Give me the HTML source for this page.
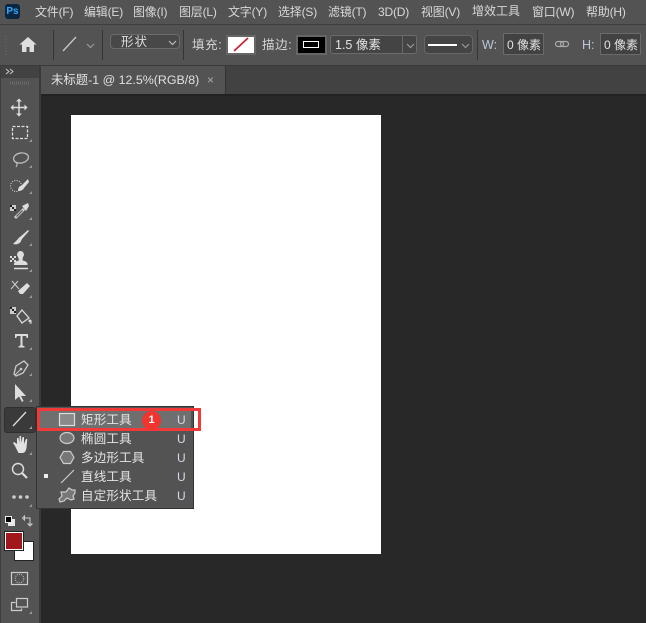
<!DOCTYPE html>
<html lang="zh"><head><meta charset="utf-8"><style>
html,body{margin:0;padding:0}
body{width:646px;height:623px;overflow:hidden;position:relative;background:#282828;font-family:"Liberation Sans","Noto Sans CJK SC",sans-serif;color:#dcdcdc}
.a{position:absolute}
.t{position:absolute;white-space:nowrap;font-size:12px;line-height:16px;letter-spacing:0}
.m{top:4px;color:#d8d8d8;letter-spacing:-.2px}
.i{top:37px;color:#d4d4d4;font-size:12.5px}
.box{position:absolute;box-sizing:border-box}
.mi{position:absolute;left:81px;font-size:12.5px;color:#e4e4e4;line-height:16px;white-space:nowrap;letter-spacing:.2px}
.u{position:absolute;left:177px;font-size:12px;line-height:16px;color:#d8d8e8}
svg{position:absolute;left:0;top:0}
</style></head><body>
<!-- menu bar -->
<div class="a" style="left:0;top:0;width:646px;height:24px;background:#535353"></div>
<div class="a" style="left:0;top:24px;width:646px;height:1px;background:#3d3d3d"></div>
<div class="a" style="left:5px;top:4px;width:15px;height:15px;background:#0a2640;border-radius:3px;color:#31a8ff;font:bold 10px/15px 'Liberation Sans',sans-serif;text-align:center">Ps</div>
<span class="t m" style="left:35px">文件(F)</span>
<span class="t m" style="left:84px">编辑(E)</span>
<span class="t m" style="left:133px">图像(I)</span>
<span class="t m" style="left:179px">图层(L)</span>
<span class="t m" style="left:228px">文字(Y)</span>
<span class="t m" style="left:278px">选择(S)</span>
<span class="t m" style="left:328px">滤镜(T)</span>
<span class="t m" style="left:378px">3D(D)</span>
<span class="t m" style="left:421px">视图(V)</span>
<span class="t m" style="left:472px;top:3px;letter-spacing:0">增效工具</span>
<span class="t m" style="left:532px">窗口(W)</span>
<span class="t m" style="left:586px">帮助(H)</span>
<!-- options bar -->
<div class="a" style="left:0;top:25px;width:646px;height:40px;background:#535353"></div>
<div class="a" style="left:0;top:65px;width:646px;height:1px;background:#3a3a3a"></div>
<div class="a" style="left:53px;top:30px;width:1px;height:30px;background:#353535"></div>
<div class="a" style="left:102px;top:30px;width:1px;height:30px;background:#353535"></div>
<div class="a" style="left:183px;top:30px;width:1px;height:30px;background:#353535"></div>
<div class="a" style="left:477px;top:30px;width:1px;height:30px;background:#353535"></div>
<div class="box" style="left:110px;top:34px;width:70px;height:15px;border:1px solid #6b6b6b;border-radius:4px;background:#484848"></div>
<span class="t" style="left:121px;top:34px;font-size:12.5px;letter-spacing:1px;color:#dedede">形状</span>
<span class="t i" style="left:192px;letter-spacing:.6px">填充:</span>
<div class="box" style="left:226px;top:35px;width:30px;height:20px;border:2px solid #666;background:#fff"></div>
<span class="t i" style="left:262px;letter-spacing:.6px">描边:</span>
<div class="box" style="left:296px;top:35px;width:31px;height:20px;border:2px solid #666;background:#000"></div>
<div class="box" style="left:303px;top:41px;width:16px;height:7px;border:1px solid #fff"></div>
<div class="box" style="left:330px;top:35px;width:87px;height:19px;border:1px solid #6b6b6b;border-radius:3px;background:#444"></div>
<div class="a" style="left:402px;top:35px;width:1px;height:19px;background:#6b6b6b"></div>
<span class="t" style="left:335px;top:37px;font-size:12.5px;color:#e2e2e2">1.5 像素</span>
<div class="box" style="left:424px;top:35px;width:49px;height:19px;border:1px solid #666;border-radius:4px;background:#444"></div>
<div class="a" style="left:428px;top:44px;width:29px;height:2px;background:#fff"></div>
<span class="t" style="left:482px;top:37px;color:#bcc6d6;font-size:12.5px">W:</span>
<div class="box" style="left:503px;top:33px;width:41px;height:22px;border:1px solid #6a6a6a;background:#424242"></div>
<span class="t" style="left:507px;top:37px;font-size:12px;color:#e2e2e2">0 像素</span>
<span class="t" style="left:582px;top:37px;color:#bcc6d6;font-size:12.5px">H:</span>
<div class="box" style="left:600px;top:33px;width:41px;height:22px;border:1px solid #6a6a6a;background:#424242"></div>
<span class="t" style="left:604px;top:37px;font-size:12px;color:#e2e2e2">0 像素</span>
<!-- tab strip -->
<div class="a" style="left:0;top:66px;width:646px;height:29px;background:#424242"></div>
<div class="a" style="left:41px;top:66px;width:184px;height:28px;background:#535353"></div>
<div class="a" style="left:225px;top:66px;width:1px;height:29px;background:#333"></div>
<span class="t" style="left:51px;top:71px;font-size:12.4px;color:#e0e0e0;line-height:18px">未标题-1 @ 12.5%(RGB/8)</span>
<span class="t" style="left:207px;top:72px;font-size:12px;color:#aaa">×</span>
<div class="a" style="left:41px;top:94px;width:605px;height:2px;background:#222"></div>
<!-- toolbar -->
<div class="a" style="left:0;top:66px;width:39px;height:557px;background:#535353"></div>
<div class="a" style="left:0;top:66px;width:39px;height:12px;background:#424242"></div>
<div class="a" style="left:39px;top:66px;width:2px;height:557px;background:#3a3a3a"></div>
<div class="a" style="left:0;top:66px;width:1px;height:557px;background:#3e3e3e"></div>
<!-- active line tool -->
<div class="box" style="left:4px;top:407px;width:32px;height:26px;background:#3a3a3a;border:1px solid #2f2f2f;border-radius:3px"></div>
<!-- canvas doc -->
<div class="a" style="left:71px;top:115px;width:310px;height:439px;background:#fff"></div>
<!-- flyout -->
<div class="a" style="left:37px;top:407px;width:156px;height:101px;background:#535353;box-shadow:0 0 0 1px #333"></div>
<div class="a" style="left:39px;top:410px;width:152px;height:19px;background:#6f6f6f"></div>
<span class="mi" style="top:412px">矩形工具</span>
<span class="mi" style="top:431px">椭圆工具</span>
<span class="mi" style="top:450px">多边形工具</span>
<span class="mi" style="top:469px">直线工具</span>
<span class="mi" style="top:488px">自定形状工具</span>
<span class="u" style="top:412px">U</span>
<span class="u" style="top:431px">U</span>
<span class="u" style="top:450px">U</span>
<span class="u" style="top:469px">U</span>
<span class="u" style="top:488px">U</span>
<div class="a" style="left:44px;top:474px;width:4px;height:4px;background:#eee"></div>
<!-- red annotation -->
<div class="box" style="left:37px;top:408px;width:164px;height:23px;border:3px solid #f03a3a;background:transparent"></div>
<div class="a" style="left:142px;top:411px;width:19px;height:19px;border-radius:50%;background:#f0352f;color:#fff;font:bold 11px/19px 'Liberation Sans',sans-serif;text-align:center">1</div>
<!-- colours -->
<div class="box" style="left:14px;top:541px;width:20px;height:20px;background:#fff;border:1px solid #222"></div>
<div class="box" style="left:5px;top:532px;width:18px;height:18px;background:#a0181c;border:1px solid #fff;outline:1px solid #222"></div>
<div class="box" style="left:8px;top:519px;width:7px;height:7px;background:#e8e8e8"></div>
<div class="box" style="left:5px;top:516px;width:7px;height:7px;background:#000;border:1px solid #eee"></div>
<svg width="646" height="623" viewBox="0 0 646 623" fill="none">
<!-- grips -->
<g stroke="#6a6a6a"><path d="M6 36v1M6 39v1M6 42v1M6 45v1M6 48v1M6 51v1M6 54v1"/><path d="M10 83h19" stroke-width="3" stroke-dasharray="1 1"/></g>
<path d="M6 69l3 2.500-3 2.500M10 69l3 2.500-3 2.500" stroke="#c8c8c8"/>
<!-- home -->
<path d="M28 37l-8.500 7.500h2.500V52h4.500v-5h3v5H34v-7.500h2.500z" fill="#dedede"/>
<!-- line tool option -->
<path d="M63 51l13-14" stroke="#c8c8c8" stroke-width="1.300"/>
<path d="M87 44l3.500 3.500L94 44" stroke="#999" stroke-width="1.200"/>
<path d="M169 41l3.500 3.500 3.500-3.500" stroke="#bbb" stroke-width="1.200"/>
<path d="M407 44l3.500 3.500 3.500-3.500" stroke="#999" stroke-width="1.200"/>
<path d="M462 44l3.500 3.500 3.500-3.500" stroke="#999" stroke-width="1.200"/>
<!-- fill none slash -->
<path d="M234 51l14-13" stroke="#cc2030" stroke-width="1.700"/>
<!-- link -->
<g stroke="#aaa" stroke-width="1.200"><rect x="555.500" y="41.500" width="8" height="5" rx="2.500"/><rect x="560.500" y="41.500" width="8" height="5" rx="2.500"/></g>
<!-- tool corner marks -->
<g fill="#999"><path d="M32 142v-3l-3 3zM32 168v-3l-3 3zM32 194v-3l-3 3zM32 220v-3l-3 3zM32 246v-3l-3 3zM32 272v-3l-3 3zM32 298v-3l-3 3zM32 324v-3l-3 3zM32 350v-3l-3 3zM32 376v-3l-3 3zM32 402v-3l-3 3zM32 429v-3l-3 3zM32 455v-3l-3 3zM32 507v-3l-3 3zM32 614v-3l-3 3z"/></g>
<!-- move -->
<g stroke="#ddd" stroke-width="1.500"><path d="M19 101v13M13 107.500h13"/></g>
<path d="M19 98.500l-3 3h6zM19 116.500l-3-3h6zM10.500 107.500l3-3v6zM27.500 107.500l-3-3v6z" fill="#ddd"/>
<!-- marquee -->
<rect x="12.500" y="126.500" width="15" height="12" stroke="#ddd" stroke-width="1.300" stroke-dasharray="3 1.500"/>
<!-- lasso -->
<ellipse cx="21" cy="158" rx="7.500" ry="5" stroke="#bbb" stroke-width="1.300" transform="rotate(-10 21 158)"/>
<path d="M14 160c0 2 4 3 3 5l-1 2" stroke="#bbb" stroke-width="1.200"/>
<!-- quick select -->
<circle cx="16" cy="186" r="5.500" stroke="#ddd" stroke-dasharray="1 1.400"/>
<path d="M28 179l-6 6-3 2c-1 2-1 3-1 4 3 0 5-1 6-3l5-6z" fill="#ddd"/>
<!-- eyedropper -->
<rect x="10" y="205" width="6" height="6" fill="#ccc"/><path d="M10 205h2v2h-2zM12 207h2v2h-2zM14 209h2v2h-2z" fill="#222"/>
<path d="M15 218l9-9" stroke="#ccc" stroke-width="3"/><path d="M16.500 216.500l6-6" stroke="#535353" stroke-width="1.200"/><path d="M22 206l6-3 1 3-3 5z" fill="#ddd"/>
<!-- brush -->
<path d="M28 230l-8 7c-2 1-1 1-2 2l-5 5c3 1 7 0 8-3l1-2 7-8z" fill="#ddd"/>
<!-- stamp -->
<path d="M10 256h2v2h-2zM14 256h2v2h-2zM12 258h2v2h-2zM10 260h2v2h-2zM14 260h2v2h-2z" fill="#ddd"/>
<path d="M18 257a3.500 3.500 0 1 1 5 0l-.5 3c0 1 5 1 5 4v1H14v-1c0-3 5-3 5-4z" fill="#ddd"/><path d="M14 268.500h14" stroke="#ddd" stroke-width="1.500"/>
<!-- eraser -->
<path d="M12 281l7 8M18 281l-7 8" stroke="#ccc"/><path d="M18 291l9-8 3 3-7 8h-3z" fill="#ddd"/>
<!-- bucket -->
<rect x="10" y="307" width="6" height="7" fill="#ccc"/><path d="M10 307h2v2h-2zM12 309h2v2h-2zM14 311h2v2h-2z" fill="#222"/>
<path d="M22 310l7 8-7 5-5-7z" stroke="#ddd" stroke-width="1.300"/><circle cx="30" cy="321" r="1.500" fill="#ddd"/>
<!-- T tool -->
<path d="M15 334h13v4h-1.200l-.8-2h-3.500v9.500l2 .8v1.200h-6v-1.200l2-.8V336h-3.500l-.8 2H15z" fill="#ddd"/>
<!-- pen -->
<path d="M14 374l2-8 8-5 4 4-5 8-7 3z" stroke="#ccc" stroke-width="1.300"/><path d="M15 375l5-5" stroke="#ccc"/><circle cx="21" cy="369" r="1.300" fill="#ccc"/>
<!-- arrow -->
<path d="M15 384v16l4-3.500 3 5.500 1.500-1-2.500-5 5 0z" fill="#ddd"/>
<!-- line -->
<path d="M13 426l13-14" stroke="#ddd" stroke-width="1.300"/>
<!-- hand -->
<g transform="translate(0 3)"><path d="M15 443l-2-3 1-1 3 2v-6h1.500l1 5v-7h1.500l.5 7 1-6h1.500l0 7 2-5h1.300l-.8 9c-1 4-2 5-5 5h-3z" fill="#e2e2e2"/></g>
<!-- zoom -->
<circle cx="18" cy="469" r="5.500" stroke="#ddd" stroke-width="1.400"/><path d="M22 473l5 5" stroke="#ddd" stroke-width="2.200"/>
<!-- dots -->
<g fill="#ccc"><circle cx="14" cy="497" r="1.800"/><circle cx="20.500" cy="497" r="1.800"/><circle cx="27" cy="497" r="1.800"/></g>
<!-- swap -->
<path d="M24 518h6v6M22.500 518l2-2v4zM30 526l-2-2h4z" stroke="#ccc"/>
<!-- quick mask -->
<rect x="11.500" y="572.500" width="16" height="12" stroke="#ccc" stroke-width="1.200"/><circle cx="19.500" cy="578.500" r="4.300" stroke="#ccc" stroke-dasharray="1 1.200"/>
<!-- screen -->
<path d="M15.500 602.500h-4v8h10v-2" stroke="#ccc" stroke-width="1.200"/><rect x="16.500" y="598.500" width="11" height="8.500" stroke="#ccc" stroke-width="1.200"/>
<!-- menu icons -->
<rect x="59.500" y="413.500" width="15" height="12" fill="#8a8a8a" stroke="#ddd" stroke-width="1.200"/>
<ellipse cx="67" cy="438" rx="7" ry="5.500" fill="#777" stroke="#ccc" stroke-width="1.200"/>
<path d="M63.500 451.500h7l3.500 6-3.500 6h-7L60 457.500z" fill="#777" stroke="#ccc" stroke-width="1.200"/>
<path d="M61 483l13-13" stroke="#ccc" stroke-width="1.200"/>
<path d="M59 499l3-3-1-4 5 0 3-4 3 2 3 0 0 3-2 3 1 3-3 1-4-2-3 3-4 1z" fill="#777" stroke="#ccc" stroke-width="1.200"/>
</svg>
</body></html>
